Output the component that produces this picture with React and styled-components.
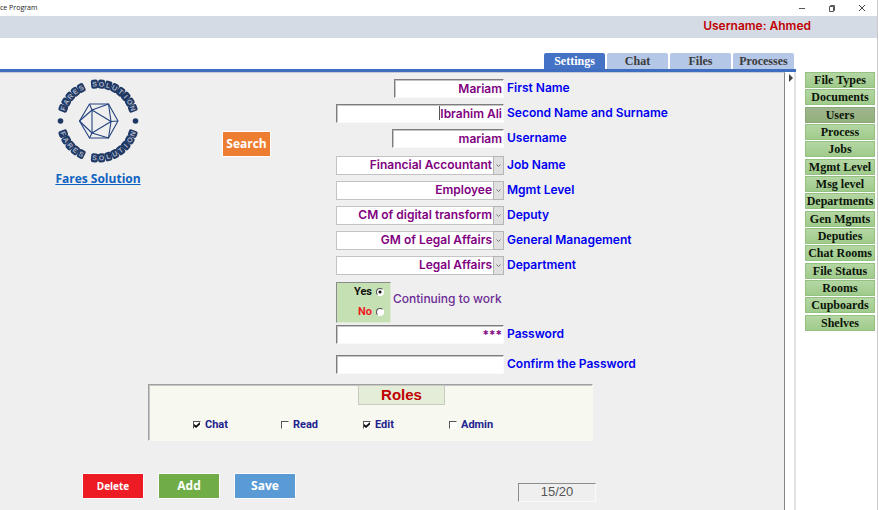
import { useState } from "react"
import styled, { createGlobalStyle } from "styled-components"

const GlobalStyle = createGlobalStyle`
  * {
    box-sizing: border-box;
  }
  body {
    margin: 0;
    background: #fff;
    font-family: "Liberation Sans", Arial, sans-serif;
  }
  button, input, select {
    margin: 0;
    font: inherit;
  }
`

const Page = styled.div`
  display: flex;
  flex-direction: column;
  min-height: 100vh;
  border-right: 1px solid #c9c9c9;
`

const TitleBar = styled.header`
  display: flex;
  justify-content: space-between;
  height: 16px;
  font: 7px/16px "Open Sans", sans-serif;
  color: #222;
`

const WindowButton = styled.button`
  width: 30px;
  height: 16px;
  padding: 0;
  border: 0;
  background: none;
  svg {
    display: block;
    margin: 0 auto;
  }
`

const UserBand = styled.div`
  height: 22px;
  padding-right: 66px;
  background: #d5dbe5;
  color: #c00000;
  text-align: right;
  font: 600 12px/19px Inter, sans-serif;
`

const Tabs = styled.nav`
  display: flex;
  justify-content: flex-end;
  gap: 2px;
  padding: 15px 83px 0 0;
`

const Tab = styled.button`
  width: 61px;
  height: 16px;
  padding: 0;
  border: 0;
  border-radius: 2px 2px 0 0;
  background: ${(p) => (p.$active ? "#4472c4" : "#b4c7e7")};
  color: ${(p) => (p.$active ? "#fff" : "#3b3b3b")};
  font: bold 12px/16px "Liberation Serif", serif;
`

const Body = styled.div`
  display: flex;
  flex: 1;
`

const Main = styled.main`
  display: flex;
  flex: 1;
  border-top: 3px solid #3f6dc0;
`

const Panel = styled.form`
  flex: 1;
  border-top: 1px solid #c4cad4;
  border-right: 1px solid #858585;
  background: #efefef;
`

const Gutter = styled.div`
  width: 11px;
  padding: 2px 0 0 3px;
  border-right: 2px solid #e2e2e2;
  svg {
    display: block;
  }
`

const Top = styled.div`
  display: grid;
  grid-template-columns: 196px 1fr 448px;
  align-items: start;
  padding-top: 6px;
`

const Brand = styled.div`
  display: flex;
  flex-direction: column;
  align-items: center;
  gap: 7px;
`

const BrandLink = styled.a`
  color: #0f63c0;
  font: bold 12px/17px "Open Sans", sans-serif;
`

const ActionButton = styled.button`
  width: ${(p) => p.$width || 62}px;
  height: 26px;
  padding: 0;
  border: 1px solid #fdfdfd;
  background: ${(p) => p.$color};
  color: #fff;
  font: bold ${(p) => (p.$small ? 10 : 12)}px/24px "Open Sans", sans-serif;
`

const SearchCell = styled.div`
  padding: 52px 0 0 26px;
`

const Fields = styled.div`
  display: flex;
  flex-direction: column;
`

const Group = styled.div`
  display: flex;
  flex-direction: column;
  gap: ${(p) => p.$gap || 6}px;
  margin-bottom: ${(p) => p.$after}px;
`

const Row = styled.div`
  display: grid;
  grid-template-columns: 168px 1fr;
  column-gap: 3px;
`

const Label = styled.label`
  color: #0000f0;
  font: 600 12px/18px Inter, sans-serif;
`

const Control = styled.div`
  position: relative;
  justify-self: end;
  width: ${(p) => p.$width || 168}px;
`

const TextInput = styled.input`
  display: block;
  width: 100%;
  height: 19px;
  padding: 0 1px 1px;
  border: 1px solid;
  border-color: #7d7d7d #fafafa #fafafa #7d7d7d;
  outline: 0;
  background: #fff;
  box-shadow: inset 1px 1px #c4c4c4;
  color: #800080;
  text-align: right;
  font: 600 12px/16px Inter, sans-serif;
`

const Caret = styled.span`
  position: absolute;
  top: 2px;
  right: 64px;
  width: 1px;
  height: 14px;
  background: #555;
`

const Select = styled.select`
  display: block;
  width: 100%;
  height: 19px;
  padding: 0 11px 1px 2px;
  appearance: none;
  border: 1px solid #c3c3c3;
  border-radius: 0;
  background: #fff;
  color: #800080;
  text-align-last: right;
  font: 600 12px/16px Inter, sans-serif;
`

const Arrow = styled.span`
  position: absolute;
  top: 0;
  right: 0;
  display: grid;
  place-items: center;
  width: 11px;
  height: 19px;
  border: 1px solid #b5b5b5;
  background: #e0e0e0;
  pointer-events: none;
`

const WorkRow = styled.div`
  display: flex;
  gap: 2px;
  margin-bottom: 2px;
`

const RadioBox = styled.div`
  display: flex;
  flex-direction: column;
  gap: 6px;
  width: 55px;
  height: 41px;
  padding: 2px 6px 0 0;
  border: 1px solid;
  border-color: #8c8c8c #dfe9d8 #dfe9d8 #8c8c8c;
  background: #c5e0b3;
`

const RadioLabel = styled.label`
  display: flex;
  align-items: center;
  justify-content: flex-end;
  gap: 4px;
  color: ${(p) => p.$color};
  font: bold 11px/14px Roboto, sans-serif;
`

const Radio = styled.input`
  width: 8px;
  height: 8px;
  appearance: none;
  border: 1px solid;
  border-color: #555 #fff #fff #555;
  border-radius: 50%;
  background: #fff;
  &:checked {
    background: radial-gradient(circle, #111 0 1px, #fff 2px);
  }
`

const WorkTitle = styled.span`
  padding-top: 8px;
  color: #6b2c96;
  font: 500 12px/17px Inter, sans-serif;
`

const Roles = styled.section`
  height: 57px;
  margin: 0 191px 32px 148px;
  border: 1px solid;
  border-color: #a0a0a0 #f7f8f0 #f7f8f0 #a0a0a0;
  box-shadow: inset 1px 1px #c4c4c4;
  background: #f7f8f0;
`

const RolesTitle = styled.h2`
  width: 87px;
  margin: 0 0 0 209px;
  border: 1px solid #c8cbc4;
  background: #e4edd8;
  color: #c00000;
  text-align: center;
  font: bold 15px/18px "Liberation Sans", sans-serif;
`

const RoleList = styled.div`
  display: grid;
  grid-template-columns: 88px 82px 86px 1fr;
  padding: 13px 0 0 44px;
`

const RoleLabel = styled.label`
  display: flex;
  align-items: center;
  gap: 4px;
  color: #22228f;
  font: bold 11px/14px Roboto, sans-serif;
`

const Check = styled.input`
  width: 8px;
  height: 8px;
  appearance: none;
  border: 1px solid;
  border-color: #555 #fff #fff #555;
  background: #fff;
  &:checked::after {
    content: "";
    display: block;
    width: 6px;
    height: 6px;
    background: #111;
    clip-path: polygon(0 35%, 35% 60%, 100% 0, 100% 40%, 35% 100%, 0 75%);
  }
`

const Actions = styled.div`
  display: flex;
  gap: 14px;
  padding: 0 188px 8px 82px;
`

const Counter = styled.output`
  width: 78px;
  height: 19px;
  margin: 10px 0 0 auto;
  border: 1px solid;
  border-color: #8c8c8c #fafafa #fafafa #8c8c8c;
  color: #555;
  text-align: center;
  font: 13px/16px "Liberation Sans", sans-serif;
`

const Side = styled.nav`
  display: flex;
  flex-direction: column;
  justify-content: space-between;
  width: 81px;
  height: 262px;
  padding: 3px 2px 0 9px;
`

const SideButton = styled.button`
  height: 16px;
  padding: 0;
  border: 1px solid ${(p) => (p.$active ? "#8aa877" : "#94c280")};
  background: ${(p) =>
    p.$active
      ? "linear-gradient(#a0b58e, #93b07c)"
      : "linear-gradient(#b4d6a3, #a0cb8c)"};
  color: #0c140a;
  white-space: nowrap;
  font: bold 12px/14px "Liberation Serif", serif;
`

const tabs = ["Settings", "Chat", "Files", "Processes"]

const sideItems = [
  "File Types",
  "Documents",
  "Users",
  "Process",
  "Jobs",
  "Mgmt Level",
  "Msg level",
  "Departments",
  "Gen Mgmts",
  "Deputies",
  "Chat Rooms",
  "File Status",
  "Rooms",
  "Cupboards",
  "Shelves",
]

const textFields = [
  { id: "first", label: "First Name", value: "Mariam", width: 110 },
  { id: "second", label: "Second Name and Surname", value: "Ibrahim Ali", caret: true },
  { id: "username", label: "Username", value: "mariam", width: 112 },
]

const combos = [
  { id: "job", label: "Job Name", value: "Financial Accountant" },
  { id: "level", label: "Mgmt Level", value: "Employee" },
  { id: "deputy", label: "Deputy", value: "CM of digital transform" },
  { id: "general", label: "General Management", value: "GM of Legal Affairs" },
  { id: "department", label: "Department", value: "Legal Affairs" },
]

const passwords = [
  { id: "password", label: "Password", value: "***" },
  { id: "confirm", label: "Confirm the Password", value: "" },
]

const roles = [
  { name: "Chat", on: true },
  { name: "Read", on: false },
  { name: "Edit", on: true },
  { name: "Admin", on: false },
]

// places one letter tile per character on an arc around the centre
function ArcText({ text, from, to, flip }) {
  const step = (to - from) / (text.length - 1)
  return [...text].map((char, i) => {
    if (char === " ") return null
    const angle = from + step * i
    const rad = (angle * Math.PI) / 180
    const x = 42 + 37 * Math.cos(rad)
    const y = 42 + 37 * Math.sin(rad)
    return (
      <g key={i} transform={`translate(${x} ${y}) rotate(${angle + (flip ? -90 : 90)})`}>
        <rect x="-3.5" y="-4.5" width="7" height="9" rx="2" fill="#1f3864" />
        <text y="2.5" textAnchor="middle" fontSize="7" fontWeight="bold" fill="#aab4c8">
          {char}
        </text>
      </g>
    )
  })
}

function Logo() {
  return (
    <svg width="84" height="84" viewBox="0 0 84 84" fontFamily="Liberation Sans">
      <ArcText text="FARES SOLUTION" from={200} to={340} />
      <ArcText text="FARES SOLUTION" from={160} to={20} flip />
      <circle cx="4.5" cy="42" r="2.8" fill="#1f3864" />
      <circle cx="79.5" cy="42" r="2.8" fill="#1f3864" />
      <g fill="none" stroke="#24427f" strokeWidth="1.1" strokeLinejoin="round">
        <path d="M33.5 25H52.5L62 42L52.5 59H33.5L23.5 42Z" />
        <path d="M36 31L55 42.5L36 54Z" />
        <path d="M33.5 25L36 31L52.5 25L55 42.5L62 42M55 42.5L52.5 59L36 54L33.5 59M36 54L23.5 42L36 31" />
      </g>
    </svg>
  )
}

function WindowControls() {
  return (
    <div>
      <WindowButton type="button" aria-label="Minimize">
        <svg width="8" height="8" fill="none" stroke="#555">
          <path d="M1 4.5H7" />
        </svg>
      </WindowButton>
      <WindowButton type="button" aria-label="Restore">
        <svg width="8" height="8" fill="none" stroke="#555">
          <path d="M1.5 2.5H5.5V7.5H1.5ZM2.5 2.5V1.5H6.5V6.5H5.5" />
        </svg>
      </WindowButton>
      <WindowButton type="button" aria-label="Close">
        <svg width="8" height="8" fill="none" stroke="#444">
          <path d="M1 1L7 7M7 1L1 7" />
        </svg>
      </WindowButton>
    </div>
  )
}

export default function App() {
  const [tab, setTab] = useState("Settings")
  const [section, setSection] = useState("Users")

  return (
    <Page>
      <GlobalStyle />
      <TitleBar>
        <span>ce Program</span>
        <WindowControls />
      </TitleBar>
      <UserBand>Username: Ahmed</UserBand>
      <Tabs>
        {tabs.map((name) => (
          <Tab key={name} type="button" $active={name === tab} onClick={() => setTab(name)}>
            {name}
          </Tab>
        ))}
      </Tabs>
      <Body>
        <Main>
          <Panel onSubmit={(e) => e.preventDefault()}>
            <Top>
              <Brand>
                <Logo />
                <BrandLink href="#">Fares Solution</BrandLink>
              </Brand>
              <SearchCell>
                <ActionButton type="button" $color="#ed7d31" $width={49}>
                  Search
                </ActionButton>
              </SearchCell>
              <Fields>
                <Group $after={8}>
                  {textFields.map((f) => (
                    <Row key={f.id}>
                      <Control $width={f.width}>
                        <TextInput id={f.id} defaultValue={f.value} />
                        {f.caret && <Caret />}
                      </Control>
                      <Label htmlFor={f.id}>{f.label}</Label>
                    </Row>
                  ))}
                </Group>
                <Group $after={7}>
                  {combos.map((f) => (
                    <Row key={f.id}>
                      <Control>
                        <Select id={f.id}>
                          <option>{f.value}</option>
                        </Select>
                        <Arrow>
                          <svg width="5" height="4" fill="none" stroke="#777">
                            <path d="M0.5 0.5L2.5 2.5L4.5 0.5" />
                          </svg>
                        </Arrow>
                      </Control>
                      <Label htmlFor={f.id}>{f.label}</Label>
                    </Row>
                  ))}
                </Group>
                <WorkRow role="radiogroup" aria-labelledby="work">
                  <RadioBox>
                    <RadioLabel $color="#111">
                      Yes
                      <Radio type="radio" name="work" defaultChecked />
                    </RadioLabel>
                    <RadioLabel $color="#ee1c25">
                      No
                      <Radio type="radio" name="work" />
                    </RadioLabel>
                  </RadioBox>
                  <WorkTitle id="work">Continuing to work</WorkTitle>
                </WorkRow>
                <Group $gap={11} $after={10}>
                  {passwords.map((f) => (
                    <Row key={f.id}>
                      <Control>
                        <TextInput id={f.id} defaultValue={f.value} autoComplete="off" />
                      </Control>
                      <Label htmlFor={f.id}>{f.label}</Label>
                    </Row>
                  ))}
                </Group>
              </Fields>
            </Top>
            <Roles aria-labelledby="roles">
              <RolesTitle id="roles">Roles</RolesTitle>
              <RoleList>
                {roles.map((role) => (
                  <RoleLabel key={role.name}>
                    <Check type="checkbox" defaultChecked={role.on} />
                    {role.name}
                  </RoleLabel>
                ))}
              </RoleList>
            </Roles>
            <Actions>
              <ActionButton type="button" $color="#ed1c24" $small>
                Delete
              </ActionButton>
              <ActionButton type="button" $color="#70ad47">
                Add
              </ActionButton>
              <ActionButton type="submit" $color="#5b9bd5">
                Save
              </ActionButton>
              <Counter>15/20</Counter>
            </Actions>
          </Panel>
          <Gutter>
            <svg width="6" height="8" fill="#444">
              <path d="M1 0L5 4L1 8Z" />
            </svg>
          </Gutter>
        </Main>
        <Side>
          {sideItems.map((name) => (
            <SideButton
              key={name}
              type="button"
              $active={name === section}
              onClick={() => setSection(name)}
            >
              {name}
            </SideButton>
          ))}
        </Side>
      </Body>
    </Page>
  )
}
